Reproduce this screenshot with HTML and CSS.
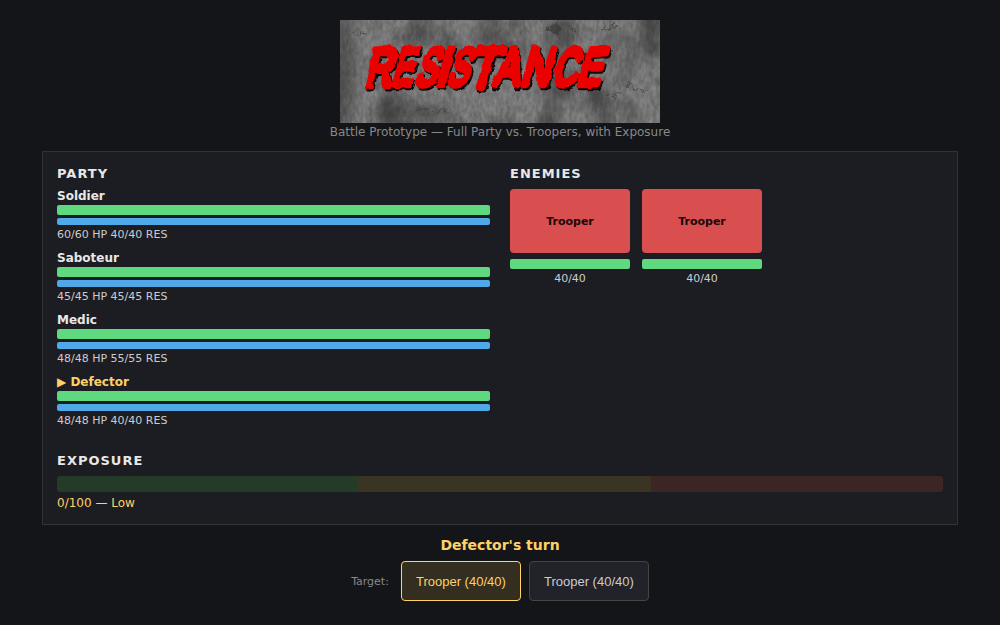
FILE: index.html
```
<!DOCTYPE html>
<html lang="en">
<head>
    <meta charset="UTF-8">
    <meta name="viewport" content="width=device-width, initial-scale=1.0">
    <title>Resistance - Battle Prototype</title>
    <link rel="stylesheet" href="styles.css">
</head>
<body>
    <header>
        <svg class="logo" viewBox="0 0 320 103" role="img" aria-label="Resistance">
            <defs>
                <filter id="concrete" x="0" y="0" width="100%" height="100%" color-interpolation-filters="sRGB">
                    <feTurbulence type="fractalNoise" baseFrequency="0.3 0.14" numOctaves="3" seed="8"/>
                    <feColorMatrix values="0.18 0 0 0 0.38  0.18 0 0 0 0.38  0.18 0 0 0 0.38  0 0 0 0 1"/>
                </filter>
                <filter id="stains" x="0" y="0" width="100%" height="100%" color-interpolation-filters="sRGB">
                    <feTurbulence type="fractalNoise" baseFrequency="0.03 0.022" numOctaves="5" seed="33"/>
                    <feColorMatrix values="0 0 0 0 0.16  0 0 0 0 0.16  0 0 0 0 0.16  1.4 0 0 0 -0.62"/>
                </filter>
                <filter id="soft" x="-50%" y="-50%" width="200%" height="200%">
                    <feGaussianBlur stdDeviation="6"/>
                </filter>
                <filter id="scuff" x="-30%" y="-30%" width="160%" height="160%" color-interpolation-filters="sRGB">
                    <feTurbulence type="fractalNoise" baseFrequency="0.15" numOctaves="3" seed="11"/>
                    <feDisplacementMap in="SourceGraphic" scale="12" xChannelSelector="R" yChannelSelector="G"/>
                    <feGaussianBlur stdDeviation="0.6"/>
                </filter>
                <filter id="rough" x="-5%" y="-10%" width="110%" height="120%" color-interpolation-filters="sRGB">
                    <feTurbulence type="fractalNoise" baseFrequency="0.13" numOctaves="2" seed="4" result="noise"/>
                    <feDisplacementMap in="SourceGraphic" in2="noise" scale="4" xChannelSelector="R" yChannelSelector="G"/>
                    <feGaussianBlur stdDeviation="0.35"/>
                </filter>
                <g id="word">
                    <text transform="translate(24 66) skewX(-13) scale(0.8 1.13)">R</text>
                    <text transform="translate(51 65) skewX(-15) scale(0.66 1.1)">E</text>
                    <text transform="translate(74 65) skewX(-18) scale(0.66 1.08)">S</text>
                    <text transform="translate(95 65) skewX(-15) scale(0.9 1.11)">I</text>
                    <text transform="translate(106 65) skewX(-18) scale(0.66 1.08)">S</text>
                    <text transform="translate(127 67) skewX(-16) scale(0.95 1.17)">T</text>
                    <text transform="translate(153 65) skewX(-13) scale(0.8 1.1)">A</text>
                    <text transform="translate(180 65) skewX(-15) scale(0.84 1.1)">N</text>
                    <text transform="translate(211 65) skewX(-16) scale(0.72 1.08)">C</text>
                    <text transform="translate(236 65) skewX(-17) scale(0.74 1.08)">E</text>
                </g>
            </defs>
            <rect width="320" height="103" filter="url(#concrete)"/>
            <rect width="320" height="103" filter="url(#stains)"/>
            <g class="shade" filter="url(#soft)">
                <ellipse cx="2" cy="50" rx="14" ry="62"/>
                <ellipse cx="70" cy="92" rx="38" ry="9"/>
                <ellipse cx="225" cy="12" rx="13" ry="14"/>
                <ellipse cx="262" cy="88" rx="10" ry="25" transform="rotate(-20 262 88)"/>
                <ellipse cx="312" cy="10" rx="14" ry="28"/>
            </g>
            <g class="scuffs" filter="url(#scuff)">
                <ellipse cx="214" cy="8" rx="6" ry="5"/>
                <path d="M228 5l8 7M262 12l14-8M13 13l12 3M284 65l22 5M268 77l14-5M78 90l32 2M1 102v-7"/>
            </g>
            <g filter="url(#rough)">
                <use href="#word" class="logo-shadow" x="1.5" y="1.5"/>
                <use href="#word" class="logo-word"/>
            </g>
        </svg>
        <p class="subtitle">Battle Prototype — Full Party vs. Troopers, with Exposure</p>
    </header>
    <main class="battle">
        <div class="sides">
            <section>
                <h2>PARTY</h2>
                <div class="member">
                    <div class="name">Soldier</div>
                    <div class="bar hp"></div>
                    <div class="bar res"></div>
                    <div class="stats">60/60 HP 40/40 RES</div>
                </div>
                <div class="member">
                    <div class="name">Saboteur</div>
                    <div class="bar hp"></div>
                    <div class="bar res"></div>
                    <div class="stats">45/45 HP 45/45 RES</div>
                </div>
                <div class="member">
                    <div class="name">Medic</div>
                    <div class="bar hp"></div>
                    <div class="bar res"></div>
                    <div class="stats">48/48 HP 55/55 RES</div>
                </div>
                <div class="member active">
                    <div class="name">▶ Defector</div>
                    <div class="bar hp"></div>
                    <div class="bar res"></div>
                    <div class="stats">48/48 HP 40/40 RES</div>
                </div>
            </section>
            <section>
                <h2>ENEMIES</h2>
                <div class="enemies">
                    <div class="enemy">
                        <div class="sprite">Trooper</div>
                        <div class="bar hp"></div>
                        <div class="stats">40/40</div>
                    </div>
                    <div class="enemy">
                        <div class="sprite">Trooper</div>
                        <div class="bar hp"></div>
                        <div class="stats">40/40</div>
                    </div>
                </div>
            </section>
        </div>
        <section class="exposure">
            <h2>EXPOSURE</h2>
            <div class="exposure-bar">
                <div class="zone low"></div>
                <div class="zone medium"></div>
                <div class="zone high"></div>
            </div>
            <div class="exposure-label">0/100 — Low</div>
        </section>
    </main>
    <div class="turn">Defector's turn</div>
    <div class="actions">
        <span class="target-label">Target:</span>
        <button class="selected">Trooper (40/40)</button>
        <button>Trooper (40/40)</button>
    </div>
</body>
</html>
```
FILE: styles.css
```
* {
    box-sizing: border-box;
}

body {
    font-family: "DejaVu Sans", sans-serif;
    margin: 0;
    padding: 20px 42px 0;
    background-color: #141518;
    color: #e8e8e8;
}

header {
    text-align: center;
}

.logo {
    display: block;
    width: 320px;
    height: 103px;
    margin: 0 auto;
}

.logo text {
    font-family: "Liberation Sans", sans-serif;
    font-size: 48px;
    stroke-width: 6;
    stroke-linejoin: round;
}

.logo-word {
    fill: #eb0000;
    stroke: #eb0000;
}

.logo-shadow {
    fill: #0c0606;
    stroke: #0c0606;
}

.shade {
    fill: #1c1c1c;
    opacity: 0.4;
}

.scuffs {
    fill: #333;
    stroke: #333;
    stroke-width: 1.2;
    opacity: 0.6;
}

.subtitle {
    margin: 2px 0 12px;
    font-size: 12px;
    line-height: 14px;
    color: #888;
}

.battle {
    background-color: #1c1d22;
    border: 1px solid #333;
    padding: 14px;
}

.sides {
    display: grid;
    grid-template-columns: 1fr 1fr;
    gap: 20px;
}

h2 {
    margin: 0 0 8px;
    font-size: 13px;
    line-height: 15px;
    letter-spacing: 1px;
}

.member {
    margin-bottom: 10px;
}

.name {
    margin-bottom: 2px;
    font-size: 12px;
    font-weight: bold;
    line-height: 14px;
}

.active .name {
    color: #ffd166;
}

.bar {
    height: 10px;
    border-radius: 2px;
}

.hp {
    background-color: #5fd97f;
}

.res {
    height: 7px;
    margin-top: 3px;
    background-color: #4fa8e8;
}

.stats {
    margin-top: 3px;
    font-size: 11px;
    line-height: 13px;
    color: #ccc;
}

.enemies {
    display: flex;
    gap: 12px;
}

.enemy {
    width: 120px;
    text-align: center;
}

.sprite {
    display: flex;
    align-items: center;
    justify-content: center;
    height: 64px;
    margin-bottom: 6px;
    border-radius: 4px;
    background-color: #d94f4f;
    color: #1a0a0a;
    font-size: 11px;
    font-weight: bold;
}

.exposure {
    margin-top: 16px;
}

.exposure-bar {
    display: flex;
    height: 16px;
    margin-bottom: 4px;
    border-radius: 3px;
    overflow: hidden;
}

.zone.low {
    width: 34%;
    background-color: #243b27;
}

.zone.medium {
    width: 33%;
    background-color: #3a3522;
}

.zone.high {
    width: 33%;
    background-color: #3c2525;
}

.exposure-label {
    font-size: 12px;
    line-height: 14px;
    color: #ffd166;
}

.turn {
    margin: 12px 0 8px;
    font-size: 14px;
    font-weight: bold;
    line-height: 16px;
    text-align: center;
    color: #ffd166;
}

.actions {
    display: flex;
    align-items: center;
    justify-content: center;
    gap: 8px;
}

.target-label {
    margin-right: 4px;
    font-size: 11px;
    color: #888;
}

button {
    width: 120px;
    height: 40px;
    padding: 0;
    border: 1px solid #444;
    border-radius: 4px;
    background-color: #22232a;
    color: #ccc;
    font-family: "Liberation Sans", sans-serif;
    font-size: 13px;
    cursor: pointer;
}

button.selected {
    border-color: #ffd166;
    background-color: #332e20;
    color: #ffd166;
}
```
